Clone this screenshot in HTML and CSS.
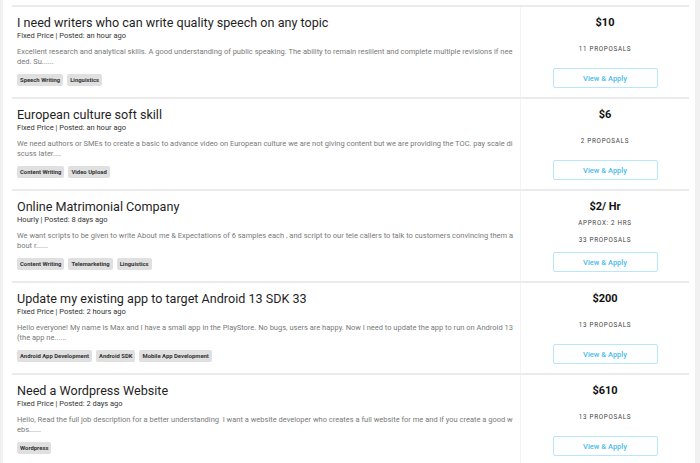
FILE: index.html
```html
<!DOCTYPE html>
<html lang="en">
<head>
    <meta charset="UTF-8">
    <meta name="viewport" content="width=device-width, initial-scale=1.0">
    <title>Jobs</title>
    <link rel="stylesheet" href="styles.css">
</head>
<body>
    <div class="job-list">
        <div class="job">
            <div class="job-main">
                <div class="job-title">I need writers who can write quality speech on any topic</div>
                <div class="job-meta">Fixed Price | Posted: an hour ago</div>
                <div class="job-desc">Excellent research and analytical skills. A good understanding of public speaking. The ability to remain resilient and complete multiple revisions if needed. Su......</div>
                <div class="tags">
                    <span class="tag">Speech Writing</span>
                    <span class="tag">Linguistics</span>
                </div>
            </div>
            <div class="job-side">
                <div class="price-block">
                    <div class="price">$10</div>
                </div>
                <div class="side-note">11 PROPOSALS</div>
                <button class="apply">View &amp; Apply</button>
            </div>
        </div>

        <div class="job">
            <div class="job-main">
                <div class="job-title">European culture soft skill</div>
                <div class="job-meta">Fixed Price | Posted: an hour ago</div>
                <div class="job-desc">We need authors or SMEs to create a basic to advance video on European culture we are not giving content but we are providing the TOC. pay scale discuss later....</div>
                <div class="tags">
                    <span class="tag">Content Writing</span>
                    <span class="tag">Video Upload</span>
                </div>
            </div>
            <div class="job-side">
                <div class="price-block">
                    <div class="price">$6</div>
                </div>
                <div class="side-note">2 PROPOSALS</div>
                <button class="apply">View &amp; Apply</button>
            </div>
        </div>

        <div class="job">
            <div class="job-main">
                <div class="job-title">Online Matrimonial Company</div>
                <div class="job-meta">Hourly | Posted: 8 days ago</div>
                <div class="job-desc">We want scripts to be given to write About me &amp; Expectations of 6 samples each , and script to our tele callers to talk to customers convincing them about r......</div>
                <div class="tags">
                    <span class="tag">Content Writing</span>
                    <span class="tag">Telemarketing</span>
                    <span class="tag">Linguistics</span>
                </div>
            </div>
            <div class="job-side">
                <div class="price-block">
                    <div class="price">$2/ Hr</div>
                    <div class="side-note approx">APPROX: 2 HRS</div>
                </div>
                <div class="side-note">33 PROPOSALS</div>
                <button class="apply">View &amp; Apply</button>
            </div>
        </div>

        <div class="job">
            <div class="job-main">
                <div class="job-title">Update my existing app to target Android 13 SDK 33</div>
                <div class="job-meta">Fixed Price | Posted: 2 hours ago</div>
                <div class="job-desc">Hello everyone! My name is Max and I have a small app in the PlayStore. No bugs, users are happy. Now I need to update the app to run on Android 13 (the app ne......</div>
                <div class="tags">
                    <span class="tag">Android App Development</span>
                    <span class="tag">Android SDK</span>
                    <span class="tag">Mobile App Development</span>
                </div>
            </div>
            <div class="job-side">
                <div class="price-block">
                    <div class="price">$200</div>
                </div>
                <div class="side-note">13 PROPOSALS</div>
                <button class="apply">View &amp; Apply</button>
            </div>
        </div>

        <div class="job">
            <div class="job-main">
                <div class="job-title">Need a Wordpress Website</div>
                <div class="job-meta">Fixed Price | Posted: 2 days ago</div>
                <div class="job-desc">Hello, Read the full job description for a better understanding&nbsp; I want a website developer who creates a full website for me and if you create a good webs......</div>
                <div class="tags">
                    <span class="tag">Wordpress</span>
                </div>
            </div>
            <div class="job-side">
                <div class="price-block">
                    <div class="price">$610</div>
                </div>
                <div class="side-note">13 PROPOSALS</div>
                <button class="apply">View &amp; Apply</button>
            </div>
        </div>
    </div>
</body>
</html>
```

FILE: styles.css
```css
body {
    margin: 0;
    background-color: #f1f1f1;
    font-family: Roboto, "Liberation Sans", Arial, sans-serif;
    color: #222;
}
.job-list {
    background-color: #fff;
    margin-left: 3px;
    width: 692px;
    padding: 5px 6px 0 9px;
    box-sizing: border-box;
    min-height: 463px;
}
.job {
    display: grid;
    grid-template-columns: 508px 1fr;
    border-top: 2px solid #ebebeb;
}
.job-main {
    padding: 8px 5px 11px;
    min-width: 0;
}
.job-title {
    font-size: 12.6px;
    line-height: 16px;
    color: #1f1f1f;
}
.job-meta {
    font-size: 7.5px;
    line-height: 10px;
    color: #333;
}
.job-desc {
    margin-top: 6px;
    font-size: 7.5px;
    line-height: 10px;
    height: 20px;
    color: #7a7a7a;
    word-break: break-all;
}
.tags {
    display: flex;
    gap: 4px;
    margin-top: 7px;
}
.tag {
    background-color: #e0e0e0;
    color: #333;
    font-size: 5.9px;
    font-weight: 700;
    line-height: 12px;
    height: 12px;
    padding: 0 3px;
    border-radius: 2px;
}
.job-side {
    border-left: 1px solid #f4f4f4;
    display: flex;
    flex-direction: column;
    align-items: center;
    justify-content: space-between;
    padding: 9px 0;
}
.price-block {
    display: flex;
    flex-direction: column;
    align-items: center;
}
.price {
    font-size: 11px;
    font-weight: 700;
    line-height: 14px;
    color: #111;
}
.side-note {
    font-size: 6.3px;
    line-height: 10px;
    letter-spacing: 0.7px;
    color: #444;
}
.approx {
    margin-top: 4px;
}
.apply {
    width: 105px;
    height: 20px;
    background-color: #fff;
    border: 1px solid #b8e6fb;
    border-radius: 2px;
    color: #4bbcec;
    font-family: Roboto, "Liberation Sans", Arial, sans-serif;
    font-size: 7.5px;
    font-weight: 500;
    padding: 0;
    cursor: pointer;
}
```
